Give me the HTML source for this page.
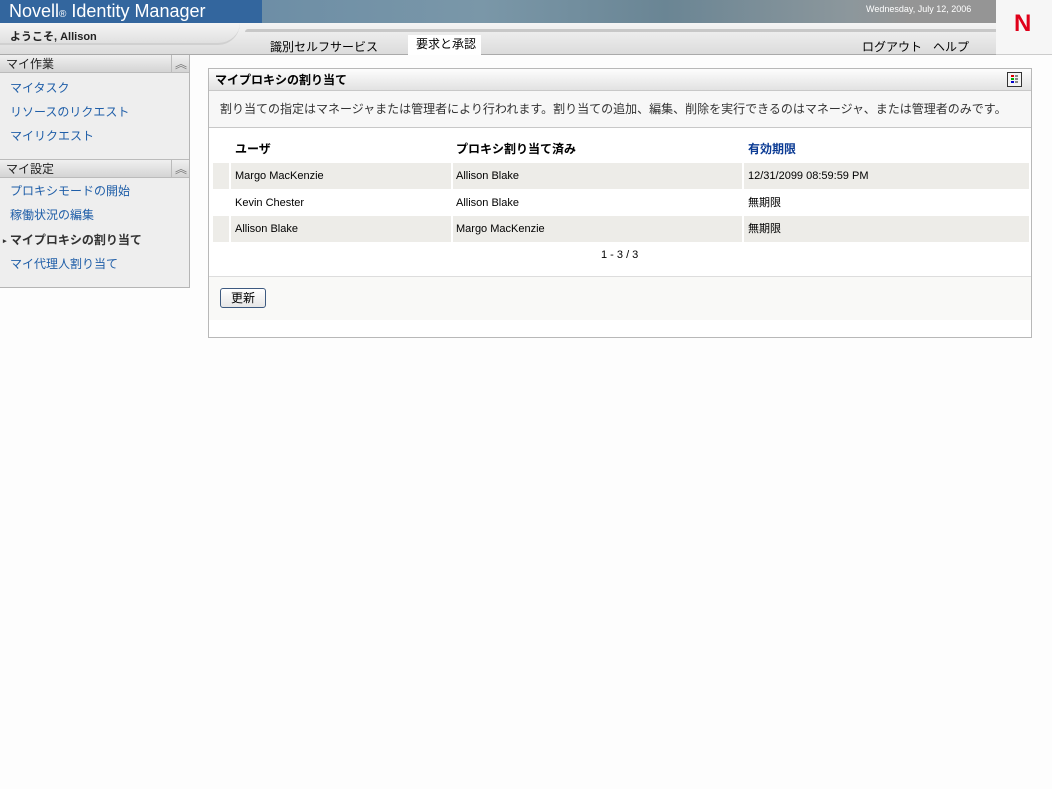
<!DOCTYPE html>
<html><head><meta charset="utf-8"><style>
*{margin:0;padding:0;box-sizing:border-box}
body{width:1052px;height:789px;background:#fdfdfd;font-family:"Liberation Sans","Noto Sans CJK JP",sans-serif;font-size:12px;color:#000;position:relative;overflow:hidden}
.a{position:absolute;white-space:nowrap}
a{color:#1f5ea8;text-decoration:none}
.c{position:absolute;white-space:nowrap;font-size:11px;line-height:26px;height:26px}
</style></head><body>
<div class="a" style="left:0;top:0;width:262px;height:23px;background:#33669e"></div>
<div class="a" style="left:262px;top:0;width:734px;height:23px;background:linear-gradient(90deg,#6d8ea6 0%,#7a97a8 30%,#6a8594 55%,#8c979c 80%,#959595 88%,#959595 100%)"></div>
<div class="a" style="left:9px;top:0;color:#fff;font-size:18px;line-height:23px">Novell<span style="font-size:10px">®</span> Identity Manager</div>
<div class="a" style="left:866px;top:4px;color:#fff;font-size:9px">Wednesday, July 12, 2006</div>
<div class="a" style="left:996px;top:0;width:56px;height:55px;background:#f6f6f6;border-bottom:1px solid #ccc"></div>
<div class="a" style="left:1014px;top:10px;color:#e0001a;font-size:24px;font-weight:bold">N</div>
<div class="a" style="left:0;top:23px;width:996px;height:32px;background:linear-gradient(#f4f4f4,#dcdcdc);border-bottom:1px solid #aaa"></div>
<div class="a" style="left:0;top:23px;width:240px;height:22px;background:linear-gradient(#f5f5f5,#e0e0e0);border-bottom:2px solid #d0d0d0;border-radius:0 0 30px 0"></div>
<div class="a" style="left:245px;top:29px;width:751px;height:3px;background:#c8c8c8;border-radius:8px 0 0 0"></div>
<div class="a" style="left:10px;top:28px;font-size:11px;font-weight:bold;color:#222">ようこそ, Allison</div>
<div class="a" style="left:270px;top:38px;font-size:12px">識別セルフサービス</div>
<div class="a" style="left:408px;top:35px;width:73px;height:20px;background:#fff"></div>
<div class="a" style="left:416px;top:35px;font-size:12px">要求と承認</div>
<div class="a" style="left:862px;top:38px;font-size:12px">ログアウト</div>
<div class="a" style="left:933px;top:38px;font-size:12px">ヘルプ</div>
<div class="a" style="left:0;top:55px;width:190px;height:233px;background:#eee;border-right:1px solid #b5b5b5;border-bottom:1px solid #b5b5b5"></div>
<div class="a" style="left:0;top:55px;width:189px;height:18px;background:linear-gradient(#f0f0f0,#d4d4d4);border-bottom:1px solid #bbb"></div>
<div class="a" style="left:171px;top:55px;width:1px;height:18px;background:#bbb"></div>
<div class="a" style="left:6px;top:55px;font-size:12px;line-height:18px;color:#222">マイ作業</div>
<div class="a" style="left:175px;top:56px;font-size:12px;line-height:16px;color:#777">︽</div>
<a class="a" style="left:10px;top:79px;font-size:12px">マイタスク</a>
<a class="a" style="left:10px;top:103px;font-size:12px">リソースのリクエスト</a>
<a class="a" style="left:10px;top:127px;font-size:12px">マイリクエスト</a>
<div class="a" style="left:0;top:159px;width:189px;height:19px;background:linear-gradient(#f0f0f0,#d4d4d4);border-top:1px solid #bbb;border-bottom:1px solid #bbb"></div>
<div class="a" style="left:171px;top:160px;width:1px;height:18px;background:#bbb"></div>
<div class="a" style="left:6px;top:160px;font-size:12px;line-height:18px;color:#222">マイ設定</div>
<div class="a" style="left:175px;top:161px;font-size:12px;line-height:16px;color:#777">︽</div>
<a class="a" style="left:10px;top:182px;font-size:12px">プロキシモードの開始</a>
<a class="a" style="left:10px;top:206px;font-size:12px">稼働状況の編集</a>
<div class="a" style="left:3px;top:231px;font-size:12px;font-weight:bold;color:#333"><span style="font-size:7px;vertical-align:middle">▸</span> マイプロキシの割り当て</div>
<a class="a" style="left:10px;top:255px;font-size:12px">マイ代理人割り当て</a>
<div class="a" style="left:208px;top:68px;width:824px;height:270px;border:1px solid #b8b8b8;background:#fff"></div>
<div class="a" style="left:209px;top:69px;width:822px;height:22px;background:linear-gradient(#fdfdfd,#e2e2e2);border-bottom:1px solid #c8c8c8"></div>
<div class="a" style="left:215px;top:69px;font-size:12px;line-height:22px;font-weight:bold">マイプロキシの割り当て</div>
<div class="a" style="left:1007px;top:72px;width:15px;height:15px;border:1px solid #333;background:#f4f4f4"></div>
<div class="a" style="left:1011px;top:75px;width:3px;height:2px;background:#d00;box-shadow:0 3px #0a0,0 6px #00c,4px 0 #888,4px 3px #888,4px 6px #888"></div>
<div class="a" style="left:209px;top:91px;width:822px;height:37px;background:#f7f7f7;border-bottom:1px solid #c8c8c8"></div>
<div class="a" style="left:220px;top:100px;font-size:12px;color:#333">割り当ての指定はマネージャまたは管理者により行われます。割り当ての追加、編集、削除を実行できるのはマネージャ、または管理者のみです。</div>
<div class="a" style="left:235px;top:140px;font-size:12px;font-weight:bold">ユーザ</div>
<div class="a" style="left:456px;top:140px;font-size:12px;font-weight:bold">プロキシ割り当て済み</div>
<div class="a" style="left:748px;top:140px;font-size:12px;font-weight:bold;color:#0b3b94">有効期限</div>
<div class="a" style="left:213px;top:163px;width:816px;height:26px;background:#edece8"></div>
<div class="a" style="left:213px;top:216px;width:816px;height:26px;background:#edece8"></div>
<div class="a" style="left:229px;top:163px;width:2px;height:79px;background:#fff"></div>
<div class="a" style="left:451px;top:163px;width:2px;height:79px;background:#fff"></div>
<div class="a" style="left:742px;top:163px;width:2px;height:79px;background:#fff"></div>
<div class="c" style="left:235px;top:163px">Margo MacKenzie</div>
<div class="c" style="left:456px;top:163px">Allison Blake</div>
<div class="c" style="left:748px;top:163px">12/31/2099 08:59:59 PM</div>
<div class="c" style="left:235px;top:190px">Kevin Chester</div>
<div class="c" style="left:456px;top:190px">Allison Blake</div>
<div class="c" style="left:748px;top:190px">無期限</div>
<div class="c" style="left:235px;top:216px">Allison Blake</div>
<div class="c" style="left:456px;top:216px">Margo MacKenzie</div>
<div class="c" style="left:748px;top:216px">無期限</div>
<div class="a" style="left:601px;top:249px;font-size:11px">1 - 3 / 3</div>
<div class="a" style="left:209px;top:276px;width:822px;height:44px;background:#f9f9f7;border-top:1px solid #ddd"></div>
<div class="a" style="left:220px;top:288px;width:46px;height:20px;border:1px solid #3d5a80;border-radius:3px;background:linear-gradient(#fff,#e6e6e6);font-size:12px;text-align:center;line-height:18px">更新</div>
</body></html>
